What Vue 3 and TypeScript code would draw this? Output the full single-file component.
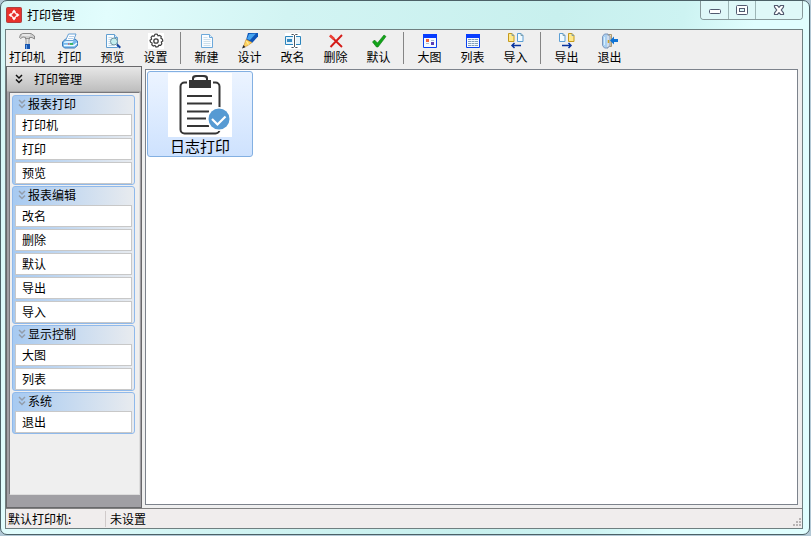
<script setup lang="ts">
interface Tool { id: string; label: string; separated?: boolean }
interface Group { title: string; items: string[] }

const tools: Tool[] = [
  { id: 'printer-setup', label: '打印机' },
  { id: 'print', label: '打印' },
  { id: 'preview', label: '预览' },
  { id: 'settings', label: '设置' },
  { id: 'new', label: '新建', separated: true },
  { id: 'design', label: '设计' },
  { id: 'rename', label: '改名' },
  { id: 'delete', label: '删除' },
  { id: 'default', label: '默认' },
  { id: 'large', label: '大图', separated: true },
  { id: 'list', label: '列表' },
  { id: 'import', label: '导入' },
  { id: 'export', label: '导出', separated: true },
  { id: 'exit', label: '退出' },
]

const groups: Group[] = [
  { title: '报表打印', items: ['打印机', '打印', '预览'] },
  { title: '报表编辑', items: ['改名', '删除', '默认', '导出', '导入'] },
  { title: '显示控制', items: ['大图', '列表'] },
  { title: '系统', items: ['退出'] },
]
</script>

<template>
  <div class="window">
    <header class="titlebar">
      <svg class="logo" viewBox="0 0 16 16" aria-hidden="true">
        <rect x=".5" y=".5" width="15" height="15" rx="1" fill="#e8322b" stroke="#b04040" />
        <path d="M8 2.5 10 5H6ZM8 13.5 6 11h4ZM2.5 8 5 6v4ZM13.5 8 11 10V6Z" fill="#fff" />
        <path d="M6 5h4v1h1v4h-1v1H6v-1H5V6h1Z" fill="#ffd9d4" />
        <path d="M8 6v4M6 8h4" stroke="#e2231f" stroke-width="1.5" />
      </svg>
      <h1>打印管理</h1>
      <div class="controls">
        <button type="button" class="ctl min" aria-label="最小化">
          <svg width="14" height="12" viewBox="0 0 14 12"><rect x="1.5" y="5.5" width="11" height="4" rx="1" fill="#fff" stroke="#535b70" /></svg>
        </button>
        <button type="button" class="ctl max" aria-label="最大化">
          <svg width="14" height="12" viewBox="0 0 14 12"><rect x="1.5" y="1.5" width="11" height="9" rx="1" fill="#fff" stroke="#535b70" /><rect x="4.5" y="4.5" width="5" height="3" fill="#dff9f9" stroke="#535b70" /></svg>
        </button>
        <button type="button" class="ctl close" aria-label="关闭">
          <svg width="14" height="12" viewBox="0 0 14 12"><path d="M2.5 1.5h3L7 3.3l1.500-1.800h3v1.500L9.300 6l2.200 3v1.500h-3L7 8.700l-1.500 1.800h-3V9l2.200-3-2.200-3Z" fill="#fff" stroke="#535b70" stroke-width="1.200" /></svg>
        </button>
      </div>
    </header>

    <div class="client">
      <nav class="toolbar" aria-label="工具栏">
        <template v-for="tool in tools" :key="tool.id">
          <span v-if="tool.separated" class="separator"></span>
          <button type="button" class="tool">
            <svg viewBox="0 0 16 16" width="16" height="16" aria-hidden="true">
              <template v-if="tool.id === 'printer-setup'">
                <path d="M.5 4.500 1.500 1.500 4 .5h8L15.500 3v3L13 4.500H10.500V6h-4V4.500L4 4 1.500 5.500Z" fill="#cfcfcf" stroke="#777" stroke-width=".8" />
                <path d="M3 2h8" stroke="#fff" />
                <path d="M7 5.500h3V12H7Z" fill="#e4e4e4" stroke="#888" stroke-width=".8" />
                <path d="M6 11h5v5H6Z" fill="#1655b0" /><path d="M7 12h1v4H7Z" fill="#6ba4e7" />
              </template>
              <template v-else-if="tool.id === 'print'">
                <path d="m.5 9 3-3H13l2.500 2v4.500L12.500 15H2.500L.5 13Z" fill="#75b8ec" stroke="#3a78b8" />
                <path d="M3.500 7.500 6.500 1H14l-2.500 6.500Z" fill="#fff" stroke="#649fd5" />
                <path d="M7 3.500h5M6 5.500h5" stroke="#b4cfe9" />
                <path d="m2 9 2-1h7.500L10 10H2Z" fill="#d7efff" />
                <path d="M2 12.500h10l3-2.500" fill="none" stroke="#f0faff" stroke-width="1.500" />
                <path d="M8 11h3" stroke="#26af3d" stroke-width="1.500" /><path d="M6 11h1.500" stroke="#e33b2b" />
              </template>
              <template v-else-if="tool.id === 'preview'">
                <path d="M1.500 1.500h8l3 3v10h-11Z" fill="#f8fcff" stroke="#629fd1" />
                <path d="M9.500 1.500v3h3" fill="#d9ecfa" stroke="#629fd1" />
                <path d="M3.500 4.500h4M3.500 6.500h3M3.500 8.500h3M3.500 10.500h3M3.500 12.500h5" stroke="#c1d9e9" />
                <circle cx="9" cy="8.500" r="3.500" fill="#c4eeee" stroke="#6e919d" /><path d="m12 11.500 3.300 3.300" stroke="#19469d" stroke-width="2.200" />
              </template>
              <template v-else-if="tool.id === 'settings'">
                <path fill="#fff" d="M0 0h16v16H0Z" />
                <path d="m8 1 1.300.3.7 1.600 1.700-.5 1.500 1.200-.3 1.700 1.500.8.4 1.900-1.500 1 .5 1.800-1.200 1.500-1.700-.2-.9 1.500-2 .4-1-1.500-1.700.5-1.500-1.200.3-1.800-1.600-.8L2 7.200l1.600-1-.5-1.700 1.200-1.500 1.700.3L7 1.200Z" fill="none" stroke="#3e3e3e" stroke-width="1.200" />
                <circle cx="8" cy="8" r="2.200" fill="none" stroke="#3e3e3e" stroke-width="1.300" />
              </template>
              <template v-else-if="tool.id === 'new'">
                <path d="M2.500 1.500h8l3 3v10h-11Z" fill="#f9fcff" stroke="#6da9da" /><path d="M10.500 1.500v3h3" fill="#dcecf9" stroke="#6da9da" />
                <path d="M4.500 4.500h4M4.500 6.500h7M4.500 8.500h7M4.500 10.500h7M4.500 12.500h7" stroke="#cbdfeb" />
              </template>
              <template v-else-if="tool.id === 'design'">
                <path d="M6 0h10v3.500L10 10 4 7Z" fill="#0d54b7" /><path d="m7 1 7-.5L8 7 5 6Z" fill="#45a3ef" />
                <path d="m4 6.500 6 3L5 13l-3.500.8Z" fill="#ffd45e" stroke="#c88a2d" stroke-width=".6" /><path d="m4.500 8 2 3.500" stroke="#fff1ae" />
                <path d="M0 15.500 1.500 12l2 2.200Z" fill="#27272b" />
              </template>
              <template v-else-if="tool.id === 'rename'">
                <path fill="#fff" d="M0 0h16v16H0Z" /><path d="M.5 3.500h15v8H.5Z" fill="#e5f3fb" stroke="#2c85bd" /><path d="M2 6h5v3H2Z" fill="#388bc2" />
                <path d="M9.500 2v12" stroke="#fff" stroke-width="3" /><path d="M6.500 1.500h2l1 1 1-1h2M9.500 2v12M6.500 14.500h2l1-1 1 1h2" fill="none" stroke="#4b5660" />
              </template>
              <template v-else-if="tool.id === 'delete'">
                <path d="M2 2.500 14 14M14 2 2.500 14" stroke="#d41a17" stroke-width="1.900" /><path d="m2 2.500 4 3.500" stroke="#ed4035" stroke-width="2.500" />
              </template>
              <template v-else-if="tool.id === 'default'">
                <path d="m1.500 9 2-2 3 3L13 2l2 1.500L7 14H5.500Z" fill="#13a41a" stroke="#087b0d" stroke-width=".6" />
              </template>
              <template v-else-if="tool.id === 'large'">
                <path d="M1.500 2.500h13v12h-13Z" fill="#f6fbff" stroke="#0a42ef" /><path d="M1 1h14v4H1Z" fill="#063cff" />
                <path d="M4 6h3v3H4Z" fill="#ef653f" /><path d="M9 9h3v3H9Z" fill="#5940b6" /><path d="M4 10.500h3M9 7.500h3" stroke="#a6bdd2" />
              </template>
              <template v-else-if="tool.id === 'list'">
                <path d="M1.500 2.500h13v12h-13Z" fill="#f6fbff" stroke="#0a42ef" /><path d="M1 1h14v4H1Z" fill="#063cff" />
                <path d="M3 6.500h10M3 8.500h10M3 10.500h10M3 12.500h10" stroke="#839fba" stroke-dasharray="3 .5" />
              </template>
              <template v-else-if="tool.id === 'import' || tool.id === 'export'">
                <path d="M.5.5H4l2 2v6H.5Z" :class="tool.id === 'import' ? 'sheet-yellow' : 'sheet-blue'" />
                <path d="M9.500.5H13l2 2v6H9.500Z" :class="tool.id === 'import' ? 'sheet-blue' : 'sheet-yellow'" />
                <path d="M4 .5v2h2M13 .5v2h2" :class="tool.id === 'import' ? 'fold' : 'fold'" />
                <path v-if="tool.id === 'import'" d="M13 12.500H4M6.500 10 4 12.500 6.500 15" class="arrow" />
                <path v-else d="M3 12.500h9M9.500 10l2.500 2.500L9.500 15" class="arrow" />
              </template>
              <template v-else>
                <path d="M5.500 1.500h4v12h-4Z" fill="#f9dfa4" stroke="#a89877" />
                <path d="m.5 3.500 2-2.500H6v14H2.500l-2-2.500Z" fill="#a9cff0" stroke="#7c96bc" /><path d="M2.500 4v8" stroke="#d8f0ff" />
                <path d="M5 1.500 8 3v10l-3 2" fill="#d0dceb" stroke="#8a9ab3" /><path d="M6.500 7v3" stroke="#caa22b" stroke-width="1.500" />
                <path d="m8 7.500 4-4V6h4v3h-4v2.500Z" fill="#0d72d4" />
              </template>
            </svg>
            <span>{{ tool.label }}</span>
          </button>
        </template>
      </nav>

      <div class="body">
        <aside class="sidebar">
          <button type="button" class="side-title">
            <svg class="chevrons" viewBox="0 0 8 10"><path d="m1 1 3 3 3-3M1 5.500l3 3 3-3" /></svg>
            <span>打印管理</span>
          </button>
          <div class="side-panel">
            <section v-for="group in groups" :key="group.title" class="group">
              <button type="button" class="group-title">
                <svg class="chevrons" viewBox="0 0 8 10"><path d="m1 1 3 3 3-3M1 5.500l3 3 3-3" /></svg>
                <span>{{ group.title }}</span>
              </button>
              <div class="group-items">
                <button v-for="item in group.items" :key="item" type="button" class="side-item">{{ item }}</button>
              </div>
            </section>
          </div>
        </aside>

        <main class="content">
          <button type="button" class="report">
            <svg viewBox="0 0 64 64" width="64" height="64" aria-hidden="true">
              <path fill="#fff" d="M0 0h64v64H0Z" />
              <rect x="12.500" y="9.500" width="39" height="51" rx="4" fill="none" stroke="#353535" stroke-width="2" />
              <path d="M19 5h26v11H19Z" fill="#fff" />
              <path d="M21 7h3V5q0-3 4-3h8q4 0 4 3v2h3v8H21Z" fill="#353535" />
              <path d="M26 6q0-2 3-2h6q3 0 3 2v1H26Z" fill="#fff" />
              <path d="M19 23h25M19 30.500h25M19 38.500h22M19 45.500h19M19 53h22" stroke="#353535" stroke-width="2" />
              <circle cx="51" cy="46" r="12" fill="#fff" /><circle cx="51" cy="46" r="10.500" fill="#569ad3" />
              <path d="m44 46 5.500 5.500 8-8" fill="none" stroke="#fff" stroke-width="2.200" />
            </svg>
            <span>日志打印</span>
          </button>
        </main>
      </div>

      <footer class="status">
        <span class="status-label">默认打印机:</span>
        <span class="status-value">未设置</span>
        <svg class="grip" width="10" height="10" viewBox="0 0 10 10"><path d="M7 0h2v2H7ZM4 3h2v2H4ZM7 3h2v2H7ZM1 6h2v2H1ZM4 6h2v2H4ZM7 6h2v2H7Z" fill="#b8b4b4" /></svg>
      </footer>
    </div>
  </div>
</template>

<style>
body { margin: 0; background: #b2c8d5; }
</style>

<style scoped>
* { box-sizing: border-box; }
button { margin: 0; padding: 0; border: 0; background: none; color: inherit; font: inherit; }
svg { display: block; flex: none; }
.window {
  display: flex;
  flex-direction: column;
  height: calc(100vh - 1px);
  margin-right: 1px;
  padding: 0 6px 5px 4px;
  border: 1px solid #4c6167;
  border-radius: 7px;
  background: linear-gradient(100deg, #d4f5f5 0%, #e2fdfd 12%, #d2f4f3 32%, #c8f0ee 62%, #cdf3f2 76%, #e0fefe 84%, #e0fefe 100%);
  color: #000;
  font: 12px/16px "Noto Sans CJK SC", sans-serif;
}
.titlebar { display: flex; align-items: flex-start; flex: none; height: 28px; }
.logo { width: 16px; height: 16px; margin: 6px 5px 0 1px; }
h1 { flex: 1; margin: 5px 0 0; font-size: 12px; font-weight: 400; line-height: 18px; }
.controls { display: flex; height: 19px; border: 1px solid #87999b; border-top: 0; border-radius: 0 0 4px 4px; overflow: hidden; }
.ctl { display: flex; align-items: center; justify-content: center; width: 27px; border-left: 1px solid #9db5b6; background: #dff8f8; }
.ctl:first-child { border-left: 0; }
.ctl.close { width: 47px; }
.client { display: flex; flex: 1; flex-direction: column; min-height: 0; border: 1px solid #6f7f80; background: #efefef; }
.toolbar { display: flex; flex: none; height: 36px; }
.tool { display: flex; flex: none; flex-direction: column; align-items: center; width: 43px; padding-top: 3px; }
.tool:first-child { width: 42px; }
.tool span { line-height: 16px; white-space: nowrap; }
.separator { flex: none; width: 1px; height: 32px; margin: 2px 4px 0 3px; background: #858585; }
.sheet-yellow { fill: #ffe98c; stroke: #c59a1d; }
.sheet-blue { fill: #f1faff; stroke: #5c9fd4; }
.fold { fill: none; stroke: #7d9eaa; }
.arrow { fill: none; stroke: #07339f; stroke-width: 1.5; }
.body { display: flex; flex: 1; min-height: 0; }
.sidebar { display: flex; flex: none; flex-direction: column; width: 136px; padding-bottom: 12px; border: 1px solid #68686b; background: #a09fa4; }
.side-title { display: flex; align-items: center; gap: 11px; flex: none; height: 25px; padding-left: 8px; border-bottom: 1px solid #aaa; background: linear-gradient(#e7e7e7, #bebebe); }
.chevrons { width: 8px; height: 10px; fill: none; stroke: #111; stroke-width: 1.5; }
.side-panel { display: flex; flex: 1; flex-direction: column; gap: 1px; margin: 0 1px 0 2px; padding: 2px 4px 2px 2px; border: 1px solid #ddd; border-top-color: #77777b; border-left-color: #77777b; background: #efefef; }
.group { flex: none; padding: 0 2px; border: 1px solid #8fb9eb; border-radius: 3px; background: linear-gradient(90deg, #a7caf1, #e8ebef); }
.group-title { display: flex; align-items: center; gap: 2px; width: 100%; height: 18px; padding: 0 0 3px 3px; }
.group-title .chevrons { stroke: #929dab; }
.group-items { display: flex; flex-direction: column; gap: 2px; }
.side-item { width: 100%; height: 22px; padding-left: 6px; border: 1px solid #c8c8c8; background: #fff; text-align: left; line-height: 20px; }
.content { flex: 1; min-width: 0; margin: 3px 4px 3px 3px; padding: 1px; border: 1px solid #7d838c; background: #fff; }
.report { display: flex; flex-direction: column; align-items: center; width: 106px; height: 86px; padding-top: 1px; border: 1px solid #83b0e2; border-radius: 3px; background: linear-gradient(#ecf4ff, #cee2fe); font-size: 15px; line-height: 18px; }
.status { display: flex; align-items: center; flex: none; height: 20px; border-top: 1px solid #818181; background: #f0eded; }
.status-label { width: 100px; height: 16px; padding-left: 2px; border-right: 1px solid #d0caca; }
.status-value { flex: 1; padding-left: 4px; }
.grip { align-self: flex-end; }
</style>
